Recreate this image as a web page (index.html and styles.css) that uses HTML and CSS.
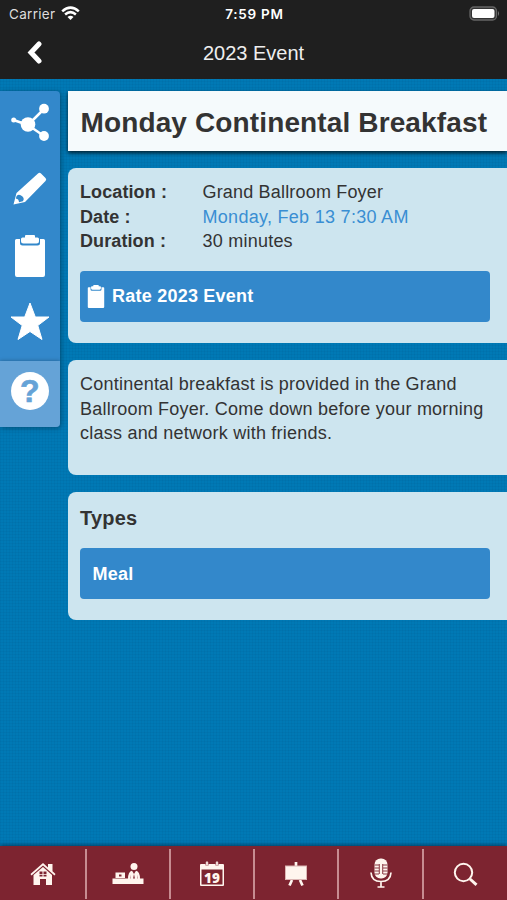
FILE: index.html
```html
<!DOCTYPE html>
<html lang="en">
<head>
    <meta charset="UTF-8">
    <meta name="viewport" content="width=device-width, initial-scale=1.0">
    <title>2023 Event</title>
    <link rel="stylesheet" href="styles.css">
</head>
<body>
    <header>
        <div class="status">
            <div class="carrier">
                <span>Carrier</span>
                <svg width="19" height="15" viewBox="0 0 19 15" fill="none" stroke="#fff" stroke-width="2.5">
                    <path d="M1.2 5.4Q9.5-2.2 17.8 5.4M4.1 8.5Q9.5 3.7 14.9 8.5"/>
                    <path d="M9.5 14L6.5 11Q9.5 8.6 12.5 11Z" fill="#fff" stroke="none"/>
                </svg>
            </div>
            <span class="clock">7:59 PM</span>
            <svg class="battery" width="31" height="15" viewBox="0 0 31 15">
                <rect x="1" y="1" width="26.5" height="13" rx="4" fill="#333" stroke="#666" stroke-width="1.3"/>
                <rect x="3" y="3" width="22.5" height="9" rx="2" fill="#fff"/>
                <path d="M29 5Q31 7.5 29 10Z" fill="#777"/>
            </svg>
        </div>
        <div class="navbar">
            <svg class="back" width="16" height="24" viewBox="0 0 16 24" fill="none" stroke="#fff" stroke-width="5">
                <path d="M13 3L5 11.500L13 20" stroke-linecap="round"/>
            </svg>
            <span>2023 Event</span>
        </div>
    </header>

    <main>
        <!-- Side actions -->
        <nav class="actions">
            <a class="action">
                <svg width="40" height="40" viewBox="0 0 40 40" fill="#fff" stroke="#fff">
                    <path d="M3.500 18L18 23L34 7M18 23L34 34" fill="none" stroke-width="2.500"/>
                    <g stroke="none">
                        <circle cx="3.700" cy="18" r="2.500"/>
                        <circle cx="18" cy="22.500" r="7.300"/>
                        <circle cx="34" cy="6.700" r="4.900"/>
                        <circle cx="34" cy="34" r="4.900"/>
                    </g>
                </svg>
            </a>
            <a class="action">
                <svg width="40" height="40" viewBox="0 2 40 40">
                    <path d="M3.500 36.500L6.500 25L28 5.500Q29.500 4 31 5.500L35.500 10Q37 11.500 35.500 13L15 34Z" fill="#fff"/>
                    <path d="M6.600 28Q9 25.500 12.500 28.500Q14.800 31 12.800 33.200L9 34.200Q8.800 31 5.800 30.600Z" fill="#3388cb"/>
                </svg>
            </a>
            <a class="action">
                <svg width="32" height="42" viewBox="0 1 32 42" fill="#fff" overflow="visible">
                    <path d="M2.500 4H6V8Q6 10.500 8.500 10.500H23.500Q26 10.500 26 8V4H29.500Q31 4 31 5.500V40Q31 42 29 42H3Q1 42 1 40V5.500Q1 4 2.500 4Z"/>
                    <path d="M7 4Q7 2.500 8.500 2.500H11V1Q11 0 12 0H20Q21 0 21 1V2.500H23.500Q25 2.500 25 4V6Q25 8.500 22.500 8.500H9.500Q7 8.500 7 6Z"/>
                </svg>
            </a>
            <a class="action">
                <svg width="40" height="40" viewBox="0 3 40 40" overflow="visible">
                    <path d="M20 1L25.300 15H39L27.800 23.500L32 37.500L20 29.500L8 37.500L12.200 23.500L1 15H14.700Z" fill="#fff" stroke="#fff" stroke-linejoin="round"/>
                </svg>
            </a>
            <a class="action help">
                <span>?</span>
            </a>
        </nav>

        <div class="content">
            <h1>Monday Continental Breakfast</h1>

            <section class="card details">
                <dl>
                    <dt>Location :</dt>
                    <dd class="location">Grand Ballroom Foyer</dd>
                    <dt>Date :</dt>
                    <dd class="date">Monday, Feb 13 7:30 AM</dd>
                    <dt>Duration :</dt>
                    <dd>30 minutes</dd>
                </dl>
                <a class="button">
                    <svg width="18" height="23" viewBox="0 0 32 42" fill="#fff">
                        <path d="M2.500 4H6V8Q6 10.500 8.500 10.500H23.500Q26 10.500 26 8V4H29.500Q31 4 31 5.500V40Q31 42 29 42H3Q1 42 1 40V5.500Q1 4 2.500 4Z"/>
                        <path d="M7 4Q7 2.500 8.500 2.500H11V1Q11 0 12 0H20Q21 0 21 1V2.500H23.500Q25 2.500 25 4V6Q25 8.500 22.500 8.500H9.500Q7 8.500 7 6Z"/>
                    </svg>
                    <span class="rate">Rate 2023 Event</span>
                </a>
            </section>

            <section class="card description">
                <p>Continental breakfast is provided in the Grand<br>
                Ballroom Foyer. Come down before your morning<br>
                class and network with friends.</p>
            </section>

            <section class="card types">
                <h2>Types</h2>
                <a class="button meal">Meal</a>
            </section>
        </div>
    </main>

    <!-- Bottom tabs -->
    <footer>
        <a class="tab">
            <svg width="26" height="24" viewBox="0 0 26 24" fill="#fff5ee">
                <path d="M0.500 12L13 1L18 5.400V2H22.500V9.300L25.500 12L24.500 13.500L13 3.500L1.500 13.500Z"/>
                <path fill-rule="evenodd" d="M3.500 13L13 5L22 13V23H16V17H10V23H3.500ZM9.500 9.500H12.500V12H9.500ZM13.500 9.500H16.500V12H13.500ZM9.500 12.800H12.500V14.500H9.500ZM13.500 12.800H16.500V14.500H13.500Z"/>
            </svg>
        </a>
        <a class="tab">
            <svg width="32" height="24" viewBox="0 0 32 24" fill="#fff5ee">
                <circle cx="22" cy="4.500" r="3.500"/>
                <path d="M16 17Q16 9.500 20 8.800L22 12L24 8.800Q28 9.500 28 17H25.800V12.500L25.300 17H23L22 12L21 17H18.700L18.200 12.500V17Z"/>
                <path fill-rule="evenodd" d="M3.500 10.500H13V16H3.500ZM7 12.500V14.500H9.500V12.500Z"/>
                <rect x="0.500" y="16.500" width="31" height="5.500"/>
            </svg>
        </a>
        <a class="tab">
            <svg width="26" height="26" viewBox="0 0 26 26">
                <path d="M2 3H24Q25 3 25 4V24Q25 25 24 25H2Q1 25 1 24V4Q1 3 2 3ZM2.500 8.500V23.500H23.500V8.500Z" fill="#fff5ee" fill-rule="evenodd"/>
                <path d="M8 1V4.500M18 1V4.500" stroke="#a9626b" stroke-width="3.200"/>
                <path d="M8 0.500V4M18 0.500V4" stroke="#fff5ee" stroke-width="1.600"/>
                <text class="day" x="13" y="21.500" text-anchor="middle">19</text>
            </svg>
        </a>
        <a class="tab">
            <svg width="24" height="26" viewBox="0 0 24 26">
                <path d="M8 19L5.500 24.500M16 19L18.500 24.500M12 1V5" stroke="#fff5ee" stroke-width="2.700"/>
                <rect x="1.500" y="5" width="21" height="13.500" fill="#fff5ee" stroke="#dcb6b4"/>
            </svg>
        </a>
        <a class="tab">
            <svg class="mic" width="22" height="30" viewBox="0 0 22 30" fill="none" stroke="#fff5ee" stroke-width="1.700">
                <rect x="4.500" y="0.500" width="13" height="20" rx="6" fill="#fff5ee" stroke="none"/>
                <path d="M1 14.500Q1.500 23.500 11 23.500Q20.500 23.500 21 14.500M11 23V29M7.500 29H14.500"/>
                <path d="M4.500 7H9M4.500 10H9M4.500 13H9M4.500 16H9M13 7H17.500M13 10H17.500M13 13H17.500M13 16H17.500M9.300 6V16M12.700 6V16" stroke="#7d2430" stroke-width="0.900"/>
            </svg>
        </a>
        <a class="tab">
            <svg width="25" height="25" viewBox="0 0 25 25" fill="none" stroke="#fff5ee">
                <circle cx="10.500" cy="10.500" r="8.700" stroke-width="2"/>
                <path d="M17 17L23.500 22.800" stroke-width="3"/>
            </svg>
        </a>
    </footer>
</body>
</html>
```
FILE: styles.css
```css
* {
    box-sizing: border-box;
}
body {
    display: flex;
    flex-direction: column;
    height: 900px;
    margin: 0;
    overflow: hidden;
    font-family: "Liberation Sans", Arial, sans-serif;
    font-size: 18px;
    letter-spacing: 0.23px;
    color: #333;
    background-color: #0079b5;
    background-image:
        repeating-linear-gradient(90deg, rgba(0, 40, 80, 0.05) 0 1px, transparent 1px 3px),
        repeating-linear-gradient(rgba(0, 40, 80, 0.05) 0 1px, transparent 1px 3px);
}
svg {
    display: block;
}
header {
    height: 79px;
    background: #1f1f1f;
    color: #fff;
}
.status {
    display: grid;
    grid-template-columns: 1fr auto 1fr;
    align-items: center;
    height: 27px;
    padding: 0 7px 0 9px;
    font-family: Inter, sans-serif;
    font-size: 13px;
}
.carrier {
    display: flex;
    align-items: center;
    gap: 6px;
    color: #ddd;
    font-size: 13.5px;
    letter-spacing: 0.3px;
}
.clock {
    font-size: 13.5px;
    font-weight: 600;
    letter-spacing: 0.75px;
}
.battery {
    justify-self: end;
}
.navbar {
    display: grid;
    grid-template-columns: 1fr auto 1fr;
    align-items: center;
    height: 52px;
    padding: 0 26px;
    font-size: 20px;
    letter-spacing: 0;
    color: #eee;
}
main {
    display: flex;
    align-items: flex-start;
    flex: 1;
    gap: 8px;
    padding-top: 12px;
}
.actions {
    width: 60px;
    border-radius: 0 4px 4px 0;
    background: #3388cb;
    box-shadow: 1px 1px 5px rgba(0, 0, 0, 0.35);
    overflow: hidden;
}
.action {
    display: flex;
    align-items: center;
    justify-content: center;
    height: 67.5px;
    padding-bottom: 5px;
}
.help {
    height: 66px;
    padding-bottom: 7px;
    background: #65a3d7;
    box-shadow: 0 0 4px rgba(0, 0, 0, 0.3);
}
.help span {
    width: 38px;
    height: 38px;
    border-radius: 50%;
    background: #fff;
    color: #65a3d7;
    font-size: 32px;
    font-weight: bold;
    line-height: 38px;
    text-align: center;
    -webkit-text-stroke: 0.6px #65a3d7;
}
.content {
    flex: 1;
}
h1 {
    height: 60px;
    margin: 0 0 17px;
    padding-left: 12.5px;
    background: #f5fafc;
    box-shadow: 0 2px 4px rgba(0, 0, 0, 0.75);
    font-size: 28px;
    letter-spacing: 0.13px;
    line-height: 63px;
    white-space: nowrap;
}
.card {
    margin-bottom: 17px;
    padding: 12px 17px 0 12px;
    border-radius: 8px 0 0 8px;
    background: #cde5ef;
}
.details {
    height: 175px;
}
.description {
    height: 115px;
}
.types {
    height: 128px;
}
dl {
    display: grid;
    grid-template-columns: 122px 1fr;
    margin: 0 0 17px;
    line-height: 24.5px;
}
dt {
    font-weight: bold;
    letter-spacing: 0.1px;
}
dd {
    margin: 0;
    padding-left: 0.5px;
}
.location {
    letter-spacing: 0.18px;
}
.date {
    color: #398ed3;
    letter-spacing: 0.29px;
}
p {
    margin: 0;
    line-height: 24.5px;
    white-space: nowrap;
}
h2 {
    margin: 0 0 16px;
    font-size: 20px;
    line-height: 28px;
}
.button {
    display: flex;
    align-items: center;
    gap: 7px;
    height: 51px;
    padding-left: 7px;
    border-radius: 4px;
    background: #3388cb;
    color: #fff;
    font-weight: bold;
}
.meal {
    padding: 1px 0 0 12.5px;
}
footer {
    display: flex;
    height: 54px;
    background: #7d2430;
    box-shadow: 0 -1px 4px rgba(0, 20, 40, 0.6);
}
.tab {
    display: flex;
    flex: 0 0 84.3px;
    align-items: center;
    justify-content: center;
    height: 50px;
    margin-top: 3px;
    border-right: 2px solid #c78c91;
}
.tab:first-child {
    flex-basis: 86.5px;
    padding-left: 1px;
}
.tab:last-child {
    flex: 1;
    border-right: none;
}
.mic {
    margin-top: -2px;
}
.day {
    fill: #fff5ee;
    font-family: "Open Sans", sans-serif;
    font-size: 13.5px;
    font-weight: 800;
    letter-spacing: 0;
}
```
